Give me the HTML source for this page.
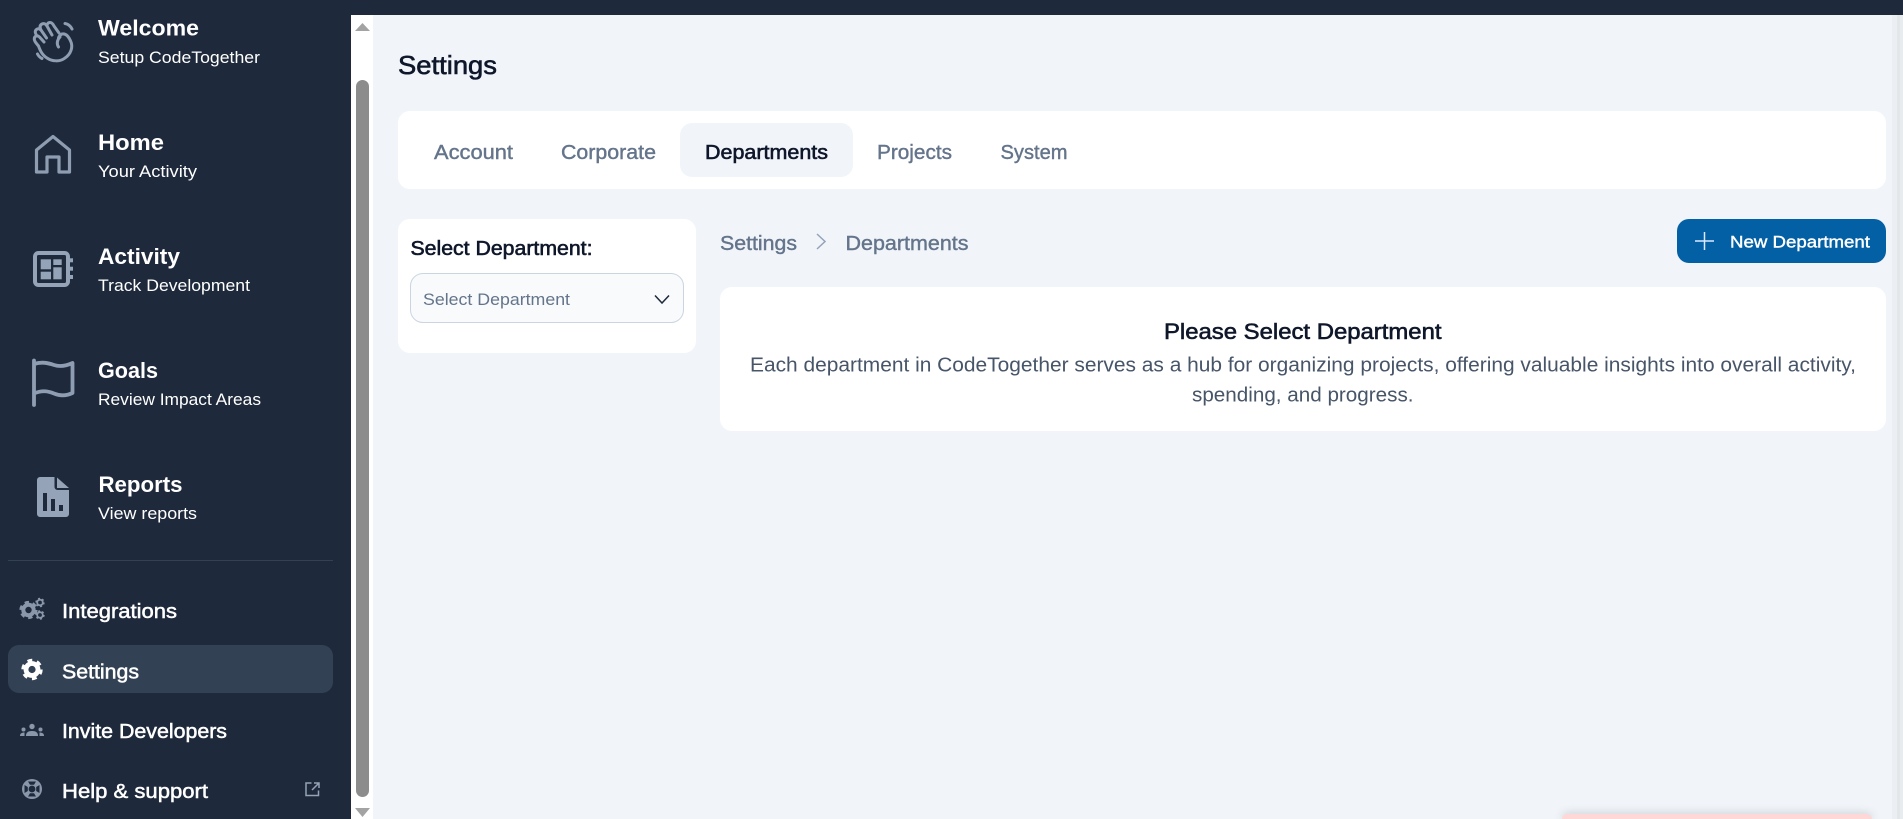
<!DOCTYPE html>
<html lang="en">
<head>
<meta charset="utf-8">
<title>Settings - Departments</title>
<style>
html,body{margin:0;padding:0;width:1903px;height:819px;overflow:hidden;background:#f1f5f9}
#root{position:relative;width:1903px;height:819px;overflow:hidden}
.b{position:absolute;box-sizing:border-box}
svg{position:absolute;left:0;top:0}
text{font-family:"Liberation Sans",Arial,sans-serif}
.t{font-size:22px;font-weight:700;fill:#fff}
.s{font-size:16.5px;fill:#fff}
.n{font-size:20px;fill:#fff;stroke:#fff;stroke-width:.5px}
.m{stroke-width:.4px}
.h{stroke-width:.6px}
</style>
</head>
<body>
<div id="root">
<div class="b" style="left:1892px;top:15px;width:5px;height:804px;background:#ebeef2"></div>
<div class="b" style="left:1897px;top:15px;width:3px;height:804px;background:#e4e7ea"></div>
<div class="b" style="left:1900px;top:15px;width:3px;height:804px;background:#e9ecef"></div>
<div class="b" style="left:0;top:0;width:351px;height:819px;background:#1e293b"></div>
<div class="b" style="left:351px;top:15px;width:22px;height:804px;background:#fff"></div>
<div class="b" style="left:356px;top:80px;width:13px;height:717px;border-radius:7px;background:#8c8c8c"></div>
<div class="b" style="left:0;top:0;width:1903px;height:15px;background:#1e293b"></div>
<div class="b" style="left:8px;top:560px;width:325px;height:1px;background:#334155"></div>
<div class="b" style="left:8px;top:645px;width:325px;height:48px;border-radius:11px;background:#334155"></div>

<div class="b" style="left:398px;top:111px;width:1488px;height:78px;border-radius:12px;background:#fff"></div>
<div class="b" style="left:680px;top:123px;width:173px;height:54px;border-radius:12px;background:#f1f5f9"></div>
<div class="b" style="left:398px;top:219px;width:298px;height:134px;border-radius:12px;background:#fff"></div>
<div class="b" style="left:410px;top:273px;width:274px;height:50px;border-radius:13px;background:#f8fafc;border:1px solid #cbd5e1"></div>
<div class="b" style="left:720px;top:287px;width:1166px;height:144px;border-radius:12px;background:#fff"></div>
<div class="b" style="left:1677px;top:219px;width:209px;height:44px;border-radius:12px;background:#0360a5"></div>
<div class="b" style="left:1562px;top:813.5px;width:310px;height:5.5px;border-radius:10px 10px 0 0;background:#fed7d7;box-shadow:0 0 9px rgba(60,70,80,.3)"></div>

<svg width="1903" height="819" viewBox="0 0 1903 819" xmlns="http://www.w3.org/2000/svg">
  <!-- scrollbar arrows -->
  <path d="M355 31L362.500 23L370 31Z" fill="#a3a3a3"/>
  <path d="M355 808H370L362.500 817Z" fill="#a3a3a3"/>

  <!-- sidebar main -->
  <text class="t" x="98" y="35.500" textLength="101" lengthAdjust="spacingAndGlyphs">Welcome</text>
  <text class="s" x="98" y="63" textLength="162" lengthAdjust="spacingAndGlyphs">Setup CodeTogether</text>
  <text class="t" x="98" y="150" textLength="66" lengthAdjust="spacingAndGlyphs">Home</text>
  <text class="s" x="98" y="177" textLength="99" lengthAdjust="spacingAndGlyphs">Your Activity</text>
  <text class="t" x="98" y="264" textLength="82" lengthAdjust="spacingAndGlyphs">Activity</text>
  <text class="s" x="98" y="291" textLength="152" lengthAdjust="spacingAndGlyphs">Track Development</text>
  <text class="t" x="98" y="378" textLength="60" lengthAdjust="spacingAndGlyphs">Goals</text>
  <text class="s" x="98" y="405" textLength="163" lengthAdjust="spacingAndGlyphs">Review Impact Areas</text>
  <text class="t" x="98.500" y="492" textLength="84" lengthAdjust="spacingAndGlyphs">Reports</text>
  <text class="s" x="98" y="519" textLength="99" lengthAdjust="spacingAndGlyphs">View reports</text>

  <!-- sidebar lower -->
  <text class="n" x="62" y="618" textLength="115" lengthAdjust="spacingAndGlyphs">Integrations</text>
  <text class="n" x="62" y="678.500" textLength="77" lengthAdjust="spacingAndGlyphs">Settings</text>
  <text class="n" x="62" y="738" textLength="165" lengthAdjust="spacingAndGlyphs">Invite Developers</text>
  <text class="n" x="62" y="798" textLength="146" lengthAdjust="spacingAndGlyphs">Help &amp; support</text>

  <!-- welcome hand -->
  <g fill="none" stroke="#8f9db2" stroke-width="3" stroke-linecap="round" stroke-linejoin="round">
    <path d="M44 42L39.500 37C38 35.500 35.500 35.500 34.500 37.500C33.500 40.500 36 43 38.500 46C40 50 42 55 47 58C52 61.500 60 62 65 58C71 54 73 47 71 42C69 37 66 33 62 34C60 35 59 36 58.500 38"/>
    <path d="M37 36C35 33 34.500 31 36.500 29.500C38.500 28 40.500 29 42 31.500L46.500 38"/>
    <path d="M41 30C39.500 27 40 25 42 24C44 23 46 24 47 26L52 35"/>
    <path d="M47 26C47 24 48 22.500 50 22.500C52 22.500 53 24 54 26L59 33"/>
    <path d="M60 37C57 40 56.500 44 58.500 47"/>
    <path d="M65 23.500C68 24 70.500 26 72 29"/>
    <path d="M37.500 54C38.500 56 40 57.500 42 58.500"/>
  </g>

  <!-- home -->
  <path d="M36.500 172V150L53 136.500L69.500 150V172H59V157H47V172Z" fill="none" stroke="#8f9db2" stroke-width="3.200" stroke-linejoin="round"/>

  <!-- activity -->
  <rect x="35" y="253" width="33" height="32" rx="3.500" fill="none" stroke="#94a3b8" stroke-width="4"/>
  <g fill="#94a3b8">
    <rect x="40.700" y="259.300" width="10.300" height="10"/>
    <rect x="40.700" y="271.700" width="10.300" height="7.600"/>
    <rect x="53.300" y="259.300" width="8.400" height="5.700"/>
    <rect x="53.300" y="267.300" width="8.400" height="12"/>
    <rect x="69" y="258.300" width="4" height="4"/>
    <rect x="69" y="266.700" width="4" height="4"/>
    <rect x="69" y="275" width="4" height="4"/>
  </g>

  <!-- goals flag -->
  <path d="M34 360.500V405M34 364C42 361.500 48 363 54 365C60 367 66 366 72.500 363V393C66 396 60 396 54 393.500C48 391 42 390 34 393.500" fill="none" stroke="#8f9db2" stroke-width="3.800" stroke-linecap="round" stroke-linejoin="round"/>

  <!-- reports -->
  <path d="M40 477H54.500V487A3 3 0 0 0 57.500 490H69V514A3 3 0 0 1 66 517H40A3 3 0 0 1 37 514V480A3 3 0 0 1 40 477Z" fill="#94a3b8"/>
  <path d="M57 477.500L69 488H57Z" fill="#94a3b8"/>
  <g fill="#1e293b">
    <rect x="43" y="493" width="4" height="18"/>
    <rect x="51" y="499" width="4" height="12"/>
    <rect x="59" y="505" width="4" height="6"/>
  </g>

  <!-- integrations gears -->
  <g fill="none" stroke="#8a97ab">
    <circle cx="28.500" cy="610" r="5.200" stroke-width="4"/>
    <circle cx="28.500" cy="610" r="7.600" stroke-width="3" stroke-dasharray="4.200 3.760"/>
    <circle cx="40" cy="602.500" r="2.800" stroke-width="1.800"/>
    <circle cx="40" cy="602.500" r="4" stroke-width="1.400" stroke-dasharray="2 2.190"/>
    <circle cx="40" cy="615" r="2.800" stroke-width="1.800"/>
    <circle cx="40" cy="615" r="4" stroke-width="1.400" stroke-dasharray="2 2.190"/>
  </g>

  <!-- settings gear -->
  <g fill="none" stroke="#fff">
    <circle cx="32" cy="669.500" r="6" stroke-width="4.800"/>
    <circle cx="32" cy="669.500" r="9" stroke-width="3.400" stroke-dasharray="4.700 4.720"/>
  </g>

  <!-- invite -->
  <g fill="#8a97ab">
    <circle cx="32" cy="726.500" r="2.700"/>
    <path d="M26 736C26 732.500 28 731 32 731C36 731 38 732.500 38 736Z"/>
    <circle cx="23.500" cy="729.500" r="2"/>
    <path d="M20 736C20 733.500 21.500 732.500 24.500 732.500V736Z"/>
    <circle cx="40.500" cy="729.500" r="2"/>
    <path d="M44 736C44 733.500 42.500 732.500 39.500 732.500V736Z"/>
  </g>

  <!-- help lifebuoy -->
  <circle cx="32" cy="789" r="10" fill="#8a97ab"/>
  <circle cx="32" cy="789" r="3.400" fill="#1e293b"/>
  <g fill="#1e293b">
    <path d="M28 781.500H36L34 784.800H30Z"/>
    <path d="M28 796.500H36L34 793.200H30Z"/>
    <path d="M24.500 785V793L27.800 791V787Z"/>
    <path d="M39.500 785V793L36.200 791V787Z"/>
  </g>

  <!-- external -->
  <path d="M311.500 783H306V795.500H318.500V790.500M312 790L318.500 783.500M314 783H319V788" fill="none" stroke="#94a3b8" stroke-width="1.500"/>

  <!-- main -->
  <text x="398" y="74" font-size="26" fill="#0f172a" stroke="#0f172a" class="h" textLength="99" lengthAdjust="spacingAndGlyphs">Settings</text>

  <text x="434" y="159" font-size="20" fill="#64748b" stroke="#64748b" class="m" textLength="79" lengthAdjust="spacingAndGlyphs">Account</text>
  <text x="561" y="159" font-size="20" fill="#64748b" stroke="#64748b" class="m" textLength="95" lengthAdjust="spacingAndGlyphs">Corporate</text>
  <text x="705" y="159" font-size="20" fill="#0f172a" stroke="#0f172a" class="h" textLength="123" lengthAdjust="spacingAndGlyphs">Departments</text>
  <text x="877" y="159" font-size="20" fill="#64748b" stroke="#64748b" class="m" textLength="75" lengthAdjust="spacingAndGlyphs">Projects</text>
  <text x="1000.500" y="159" font-size="20" fill="#64748b" stroke="#64748b" class="m" textLength="67" lengthAdjust="spacingAndGlyphs">System</text>

  <text x="410.500" y="255" font-size="20" fill="#0f172a" stroke="#0f172a" class="h" textLength="182" lengthAdjust="spacingAndGlyphs">Select Department:</text>
  <text x="423" y="305" font-size="17" fill="#64748b" textLength="147" lengthAdjust="spacingAndGlyphs">Select Department</text>
  <path d="M655 295.500L662 303L669 295.500" fill="none" stroke="#1e293b" stroke-width="1.500"/>

  <text x="720" y="250" font-size="20" fill="#64748b" stroke="#64748b" class="m" textLength="77" lengthAdjust="spacingAndGlyphs">Settings</text>
  <path d="M817 234L825 241.500L817 249" fill="none" stroke="#94a3b8" stroke-width="1.500"/>
  <text x="845.500" y="250" font-size="20" fill="#64748b" stroke="#64748b" class="m" textLength="123" lengthAdjust="spacingAndGlyphs">Departments</text>

  <path d="M1704.500 232V250M1695 241H1714" fill="none" stroke="#dbeafe" stroke-width="1.500"/>
  <text x="1730" y="247.500" font-size="17" fill="#fff" stroke="#fff" class="m" textLength="140" lengthAdjust="spacingAndGlyphs">New Department</text>

  <text x="1164" y="339" font-size="22" fill="#0f172a" stroke="#0f172a" class="h" textLength="277.500" lengthAdjust="spacingAndGlyphs">Please Select Department</text>
  <text x="750" y="371.500" font-size="20" fill="#475569" textLength="1106" lengthAdjust="spacingAndGlyphs">Each department in CodeTogether serves as a hub for organizing projects, offering valuable insights into overall activity,</text>
  <text x="1192" y="401.500" font-size="20" fill="#475569" textLength="221.500" lengthAdjust="spacingAndGlyphs">spending, and progress.</text>
</svg>
</div>
</body>
</html>
